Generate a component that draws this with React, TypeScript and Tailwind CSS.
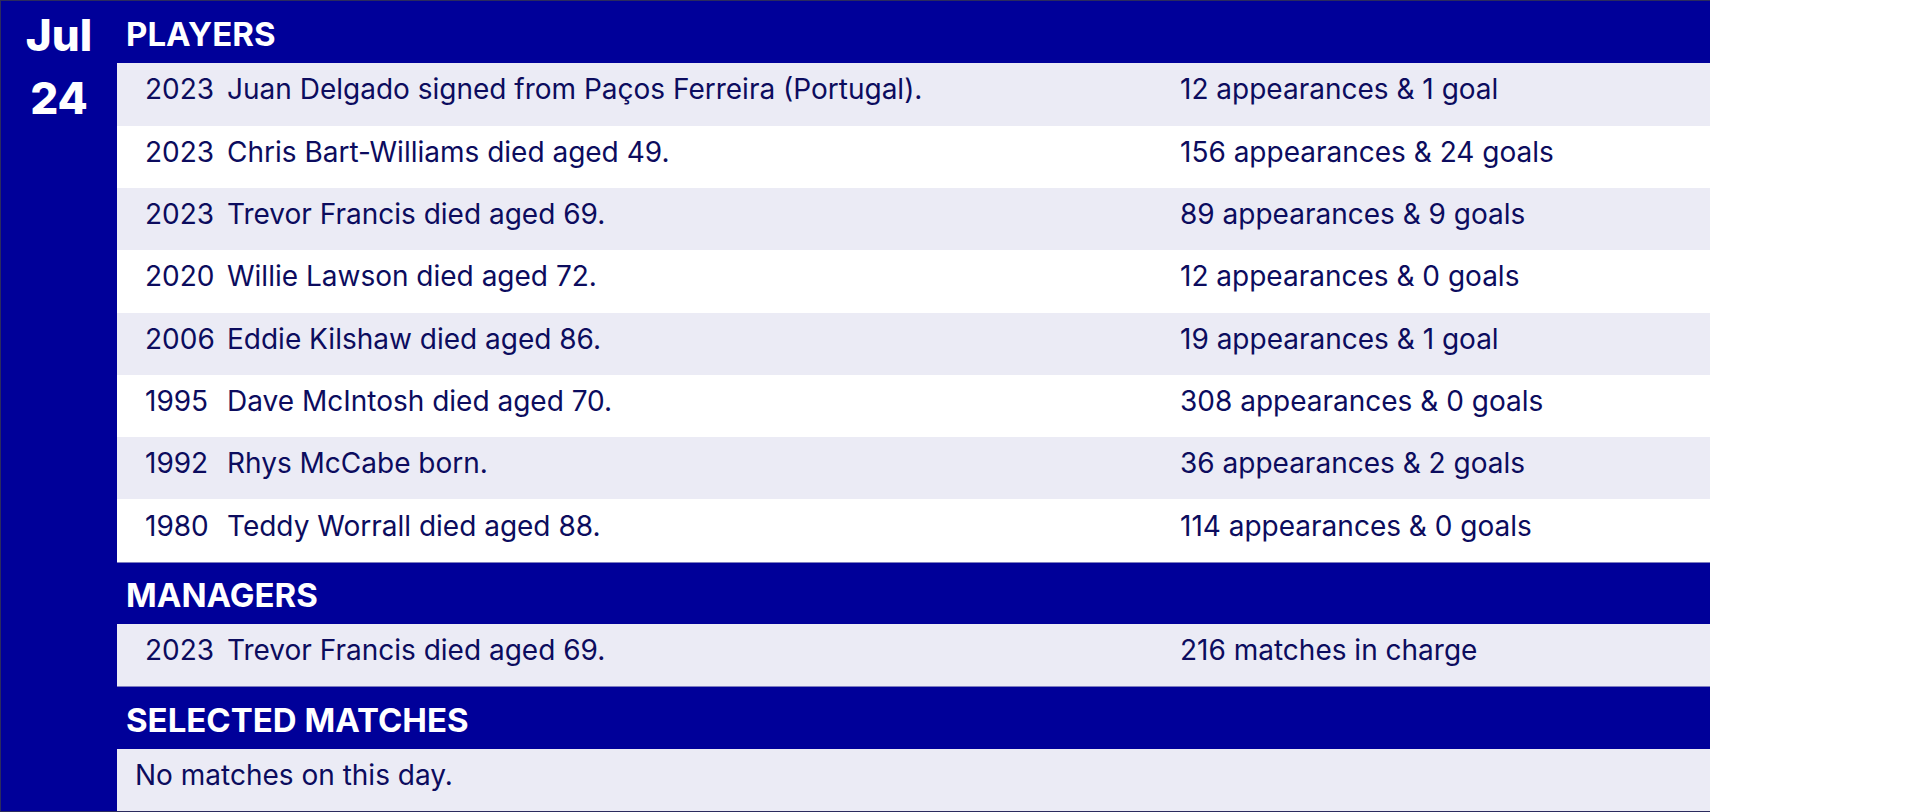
import React from "react";

type Row = { year?: string; text: string; stat?: string };

const players: Row[] = [
  { year: "2023", text: "Juan Delgado signed from Paços Ferreira (Portugal).", stat: "12 appearances & 1 goal" },
  { year: "2023", text: "Chris Bart-Williams died aged 49.", stat: "156 appearances & 24 goals" },
  { year: "2023", text: "Trevor Francis died aged 69.", stat: "89 appearances & 9 goals" },
  { year: "2020", text: "Willie Lawson died aged 72.", stat: "12 appearances & 0 goals" },
  { year: "2006", text: "Eddie Kilshaw died aged 86.", stat: "19 appearances & 1 goal" },
  { year: "1995", text: "Dave McIntosh died aged 70.", stat: "308 appearances & 0 goals" },
  { year: "1992", text: "Rhys McCabe born.", stat: "36 appearances & 2 goals" },
  { year: "1980", text: "Teddy Worrall died aged 88.", stat: "114 appearances & 0 goals" },
];

const managers: Row[] = [
  { year: "2023", text: "Trevor Francis died aged 69.", stat: "216 matches in charge" },
];

function SectionHeader({ title, first }: { title: string; first?: boolean }) {
  return (
    <div
      className={`flex items-center bg-[#000099] pl-[9px] pt-[4px] text-[33px] font-bold leading-none text-white ${
        first ? "" : "border-t border-[#7d7dc0]"
      }`}
    >
      {title}
    </div>
  );
}

function EventRow({ row, shaded }: { row: Row; shaded: boolean }) {
  return (
    <div
      className={`flex items-center pb-[10px] text-[28px] leading-none text-[#0c0c5e] ${
        shaded ? "bg-[#ebebf5]" : "bg-white"
      }`}
    >
      <span className="w-[82px] shrink-0 pl-[28px] box-content">{row.year}</span>
      <span className="w-[953px] shrink-0">{row.text}</span>
      <span>{row.stat}</span>
    </div>
  );
}

export default function App() {
  return (
    <div className="h-[812px] w-[1918px] bg-white font-['Inter',sans-serif]">
      <div className="flex h-[812px] w-[1710px] border-y border-l border-[#2b2b5e] bg-[#000099]">
        <div className="flex w-[116px] shrink-0 flex-col items-center text-[44px] font-extrabold leading-none text-white">
          <div className="flex h-[62px] items-center pt-[6px]">Jul</div>
          <div className="flex h-[62px] items-center pt-[8px]">24</div>
        </div>
        <div className="grid flex-1 grid-rows-[repeat(13,minmax(0,1fr))]">
          <SectionHeader title="PLAYERS" first />
          {players.map((r, i) => (
            <EventRow key={i} row={r} shaded={i % 2 === 0} />
          ))}
          <SectionHeader title="MANAGERS" />
          {managers.map((r, i) => (
            <EventRow key={i} row={r} shaded />
          ))}
          <SectionHeader title="SELECTED MATCHES" />
          <div className="flex items-center bg-[#ebebf5] pb-[10px] pl-[18px] text-[28px] leading-none text-[#0c0c5e]">
            No matches on this day.
          </div>
        </div>
      </div>
    </div>
  );
}
